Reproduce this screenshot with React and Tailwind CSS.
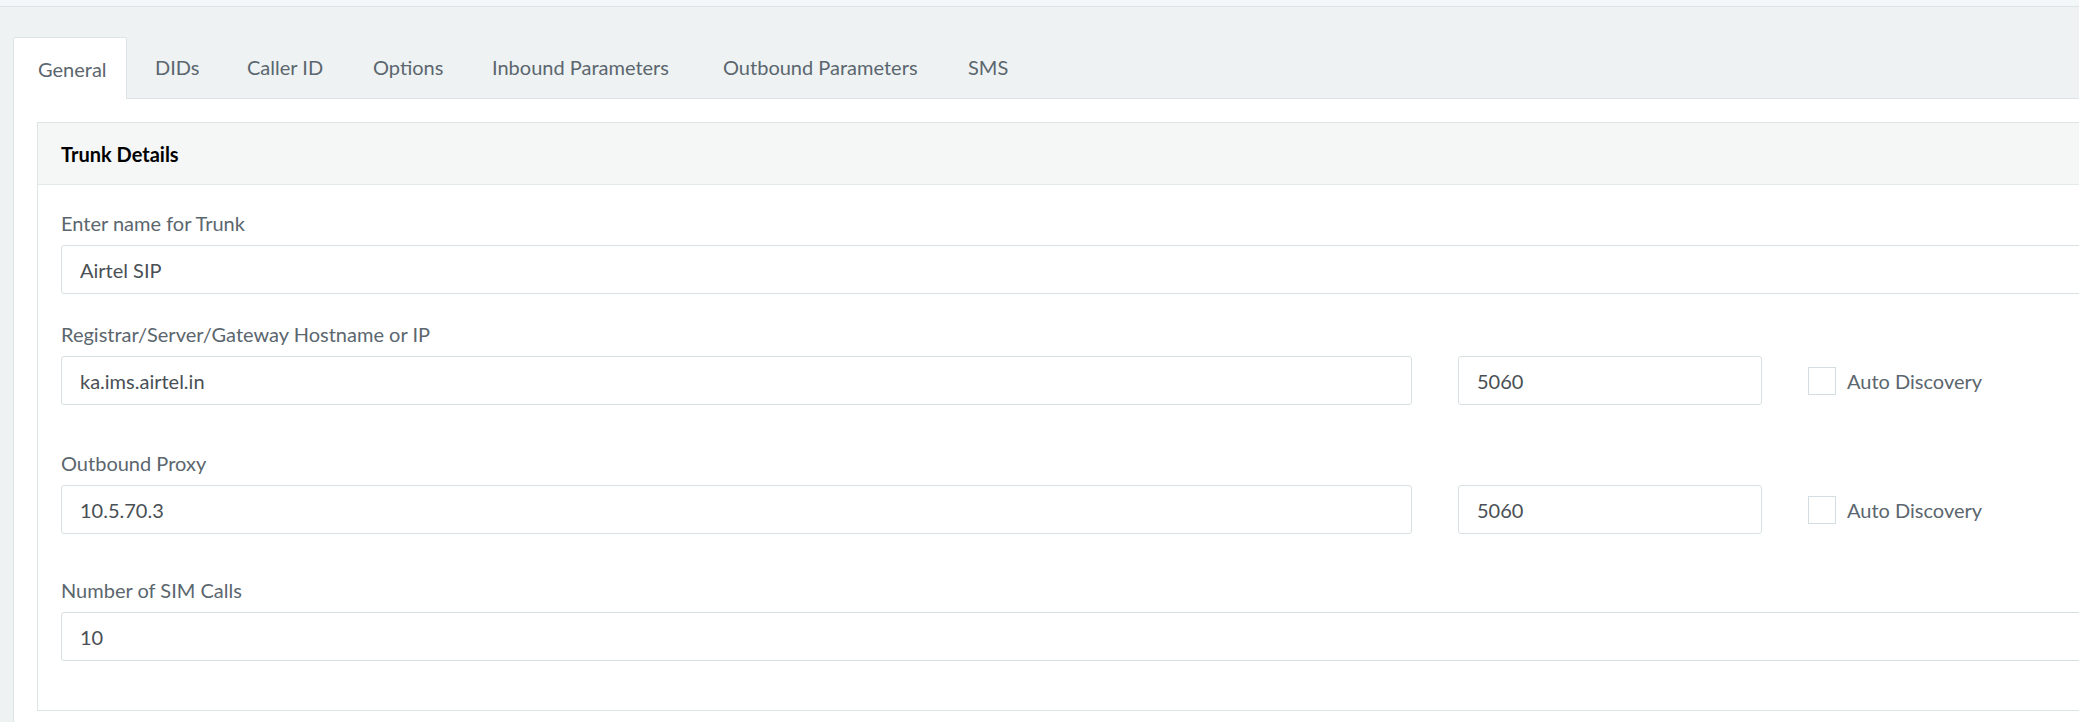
import React from 'react';

const FONT = "font-['Lato','Open_Sans',sans-serif]";

const TABS = [
  { label: 'General', w: 'w-[114px]', active: true },
  { label: 'DIDs', w: 'w-[88px]' },
  { label: 'Caller ID', w: 'w-[122px]' },
  { label: 'Options', w: 'w-[115px]' },
  { label: 'Inbound Parameters', w: 'w-[227px]' },
  { label: 'Outbound Parameters', w: 'w-[241px]' },
  { label: 'SMS', w: 'w-[85px]' },
];

const Label = ({ children, top }) => (
  <div className={`${top} mb-[10px] h-[24px] leading-[24px] text-[20px] text-[#5b666e]`}>{children}</div>
);

const Field = ({ value, className = 'w-full' }) => (
  <div className={`${className} h-[49px] flex items-center pl-[18px] border border-[#d8e0e3] rounded-[3px] bg-white text-[20px] text-[#4a4f55]`}>
    {value}
  </div>
);

const HostRow = ({ host, port }) => (
  <div className="flex items-center">
    <Field value={host} className="w-[1351px] shrink-0" />
    <Field value={port} className="ml-[46px] w-[304px] shrink-0" />
    <div className="ml-[46px] flex items-center">
      <span className="w-[28px] h-[28px] border border-[#d3dee2] bg-white"></span>
      <span className="ml-[11px] text-[20px] text-[#5b666e]">Auto Discovery</span>
    </div>
  </div>
);

export default function App() {
  return (
    <div className={`${FONT} w-[2079px] h-[722px] overflow-hidden bg-[#eef2f3]`}>
      <div className="h-[7px] bg-[#f4f7f8] border-b border-[#dde4e6]"></div>

      <div className="pl-[13px] w-[2400px]">
        {/* tabs */}
        <div className="flex items-end h-[92px] border-b border-[#dde4e6]">
          {TABS.map(t => (
            <div
              key={t.label}
              className={`${t.w} mr-[4px] h-[62px] pl-[24px] flex items-center text-[20px] text-[#5b666e] whitespace-nowrap ${
                t.active ? 'bg-white border border-b-0 border-[#dde4e6] rounded-t-[2px] -mb-px h-[62px]' : ''
              }`}
            >
              {t.label}
            </div>
          ))}
        </div>

        {/* tab pane */}
        <div className="bg-white border-l border-[#dde4e6] pl-[23px] pt-[23px] pb-[12px]">
          <div className="w-[2300px] border border-[#dde4e6] bg-white">
            <div className="h-[62px] bg-[#f5f7f7] border-b border-[#e4e9eb] flex items-center pl-[23px]">
              <span className="text-[20px] font-bold text-black">Trunk Details</span>
            </div>
            <div className="pl-[23px] pt-[26px] pb-[49px]">
              <Label>Enter name for Trunk</Label>
              <Field value="Airtel SIP" />

              <Label top="mt-[28px]">Registrar/Server/Gateway Hostname or IP</Label>
              <HostRow host="ka.ims.airtel.in" port="5060" />

              <Label top="mt-[46px]">Outbound Proxy</Label>
              <HostRow host="10.5.70.3" port="5060" />

              <Label top="mt-[44px]">Number of SIM Calls</Label>
              <Field value="10" />
            </div>
          </div>
        </div>
      </div>
    </div>
  );
}
